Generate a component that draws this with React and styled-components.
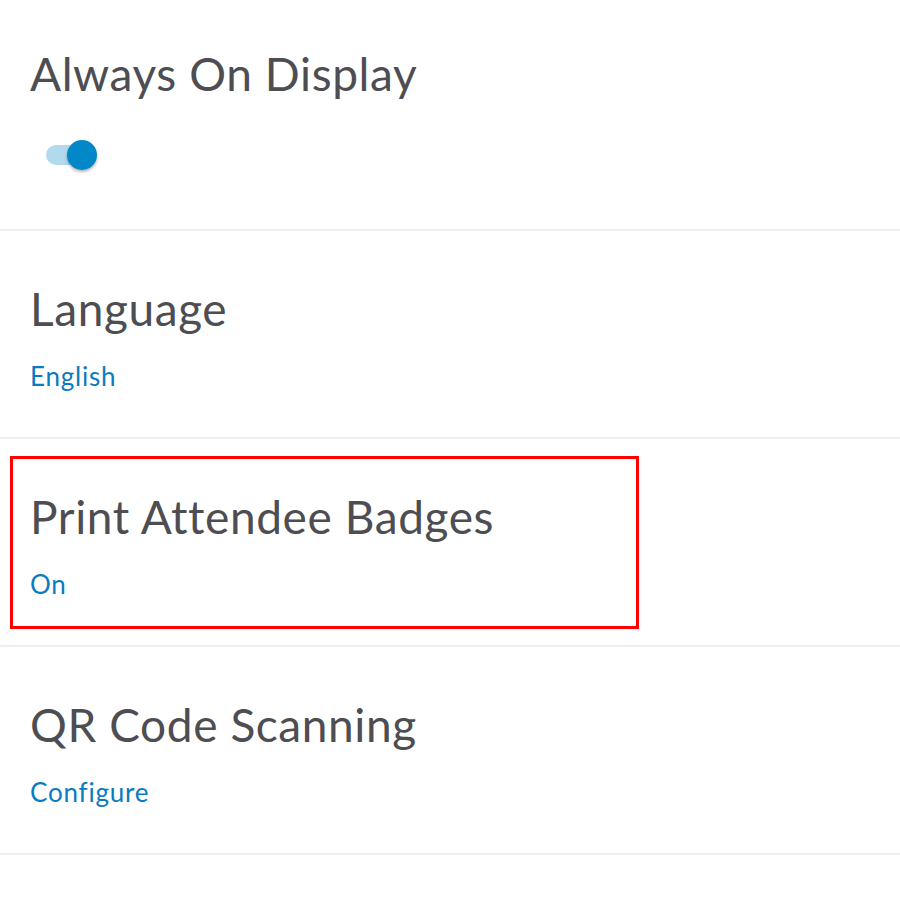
import React from 'react';
import styled, { createGlobalStyle } from 'styled-components';

const GlobalStyle = createGlobalStyle`
  html, body {
    margin: 0;
    padding: 0;
    background: #ffffff;
  }
  body {
    font-family: Lato, "Open Sans", sans-serif;
  }
`;

const SettingsList = styled.div`
  width: 900px;
  display: flex;
  flex-direction: column;
`;

const Section = styled.div`
  position: relative;
  display: flex;
  flex-direction: column;
  padding: ${(p) => (p.$first ? '51px 30px 59px' : '55px 30px 48px')};
  border-bottom: 2px solid #efefef;
`;

const Title = styled.div`
  font-size: 46px;
  line-height: 46px;
  color: #4d4d52;
  letter-spacing: 0.6px;
`;

const Value = styled.a`
  margin-top: 31px;
  font-size: 26px;
  line-height: 26px;
  color: #0a7bc1;
  letter-spacing: 0.8px;
  text-decoration: none;
`;

const SwitchWrap = styled.div`
  margin-top: 43px;
  margin-left: 16px;
  position: relative;
  width: 51px;
  height: 30px;
  display: flex;
  align-items: center;
`;

const Track = styled.div`
  width: 48px;
  height: 20px;
  border-radius: 10px;
  background: ${(p) => (p.$on ? '#b1daef' : '#d0d0d0')};
`;

const Knob = styled.div`
  position: absolute;
  top: 0;
  left: ${(p) => (p.$on ? '21px' : '-3px')};
  width: 30px;
  height: 30px;
  border-radius: 50%;
  background: ${(p) => (p.$on ? '#0288c8' : '#f5f5f5')};
  box-shadow: 0 2px 3px rgba(0, 0, 0, 0.3);
`;

const Highlight = styled.div`
  position: absolute;
  left: 10px;
  top: 17px;
  width: 623px;
  height: 167px;
  border: 3px solid #ff0000;
  pointer-events: none;
`;

const Switch = ({ on }) => (
  <SwitchWrap>
    <Track $on={on} />
    <Knob $on={on} />
  </SwitchWrap>
);

const settings = [
  { title: 'Language', value: 'English' },
  { title: 'Print Attendee Badges', value: 'On', highlighted: true },
  { title: 'QR Code Scanning', value: 'Configure' },
];

const App = () => (
  <>
    <GlobalStyle />
    <SettingsList>
      <Section $first>
        <Title>Always On Display</Title>
        <Switch on />
      </Section>
      {settings.map((s) => (
        <Section key={s.title}>
          <Title>{s.title}</Title>
          <Value href="#">{s.value}</Value>
          {s.highlighted && <Highlight />}
        </Section>
      ))}
    </SettingsList>
  </>
);

export default App;
